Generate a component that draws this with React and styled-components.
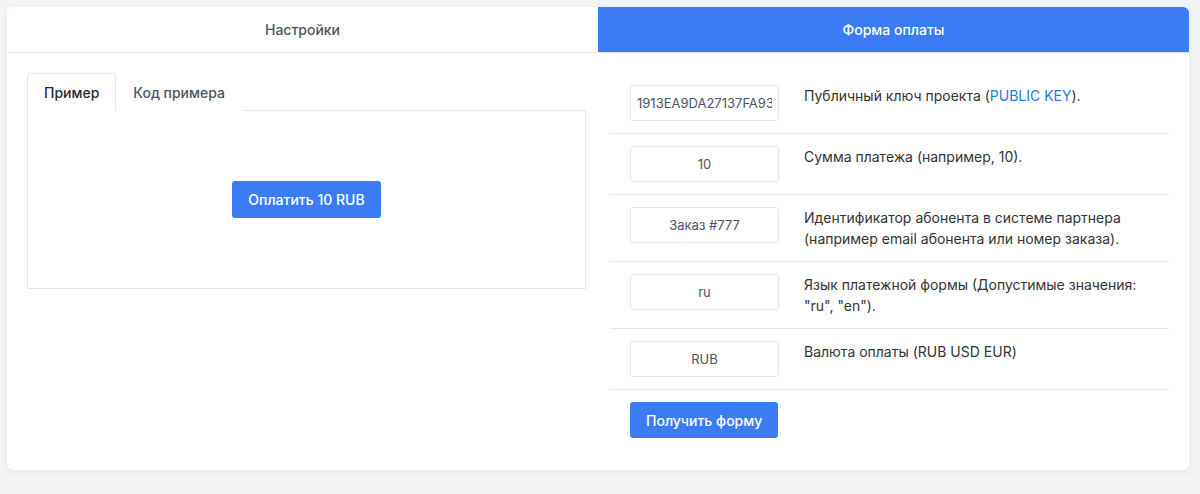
import React from "react";
import styled, { createGlobalStyle } from "styled-components";

const GlobalStyle = createGlobalStyle`
  body {
    margin: 0;
    background: #f3f4f6;
    font-family: Inter, "Noto Sans", "Liberation Sans", sans-serif;
    color: #333;
  }
`;

const Page = styled.div`
  padding: 7px 11px 24px 7px;
`;

const Card = styled.div`
  background: #fff;
  border-radius: 6px;
  box-shadow: 0 2px 8px rgba(15, 23, 42, 0.06);
  overflow: hidden;
`;

const TabBar = styled.div`
  display: grid;
  grid-template-columns: 1fr 1fr;
  border-bottom: 1px solid #e5e7eb;
`;

const MainTab = styled.div`
  height: 45px;
  display: flex;
  align-items: center;
  justify-content: center;
  font-size: 14px;
  font-weight: 500;
  color: ${(p) => (p.active ? "#fff" : "#4b5563")};
  background: ${(p) => (p.active ? "#3b7cf4" : "#fff")};
`;

const Body = styled.div`
  display: grid;
  grid-template-columns: 1fr 1fr;
  gap: 24px;
  padding: 20px 20px 32px;
`;

const LeftCol = styled.div`
  display: flex;
  flex-direction: column;
`;

const SubTabs = styled.div`
  display: flex;
  align-items: flex-end;
`;

const SubTab = styled.div`
  height: 38px;
  box-sizing: border-box;
  padding: 0 16px;
  display: flex;
  align-items: center;
  font-size: 14px;
  font-weight: 500;
  color: ${(p) => (p.active ? "#1f2937" : "#4b5563")};
  border: 1px solid ${(p) => (p.active ? "#e5e7eb" : "transparent")};
  border-bottom: none;
  border-radius: 4px 4px 0 0;
  background: #fff;
  margin-bottom: -1px;
  position: relative;
  z-index: 1;
`;

const Preview = styled.div`
  height: 179px;
  box-sizing: border-box;
  border: 1px solid #e5e7eb;
  display: flex;
  align-items: center;
  justify-content: center;
`;

const Button = styled.button`
  height: ${(p) => p.h || 36}px;
  padding: 0 16px;
  border: none;
  border-radius: 3px;
  background: #3b7cf4;
  color: #fff;
  font-family: inherit;
  font-size: 14px;
  font-weight: 500;
  cursor: pointer;
`;

const RightCol = styled.div`
  display: flex;
  flex-direction: column;
`;

const Row = styled.div`
  display: flex;
  align-items: flex-start;
  gap: 25px;
  padding: 12px 20px;
  border-bottom: 1px solid #e5e7eb;
`;

const Field = styled.input`
  width: 149px;
  height: 36px;
  box-sizing: border-box;
  flex-shrink: 0;
  border: 1px solid #e5e7eb;
  border-radius: 3px;
  padding: 0 6px;
  font-family: inherit;
  font-size: 13px;
  color: #4b5563;
  text-align: center;
  outline: none;
`;

const Label = styled.div`
  font-size: 14px;
  line-height: 21px;
  color: #333;
`;

const Link = styled.a`
  color: #1e7ae6;
  text-decoration: none;
`;

const Footer = styled.div`
  padding: 12px 20px 0;
`;

const rows = [
  { value: "1913EA9DA27137FA93C0D15E7A1B", text: "key" },
  { value: "10", text: "Сумма платежа (например, 10)." },
  {
    value: "Заказ #777",
    text: ["Идентификатор абонента в системе партнера", "(например email абонента или номер заказа)."],
  },
  {
    value: "ru",
    text: ["Язык платежной формы (Допустимые значения:", "\"ru\", \"en\")."],
  },
  { value: "RUB", text: "Валюта оплаты (RUB USD EUR)" },
];

export default function App() {
  return (
    <Page>
      <GlobalStyle />
      <Card>
        <TabBar>
          <MainTab>Настройки</MainTab>
          <MainTab active>Форма оплаты</MainTab>
        </TabBar>
        <Body>
          <LeftCol>
            <SubTabs>
              <SubTab active>Пример</SubTab>
              <SubTab>Код примера</SubTab>
            </SubTabs>
            <Preview>
              <Button h={37}>Оплатить 10 RUB</Button>
            </Preview>
          </LeftCol>
          <RightCol>
            {rows.map((r, i) => (
              <Row key={i}>
                <Field readOnly value={r.value} />
                <Label>
                  {r.text === "key" ? (
                    <>
                      Публичный ключ проекта (<Link href="#">PUBLIC KEY</Link>).
                    </>
                  ) : Array.isArray(r.text) ? (
                    r.text.map((t, j) => <div key={j}>{t}</div>)
                  ) : (
                    r.text
                  )}
                </Label>
              </Row>
            ))}
            <Footer>
              <Button>Получить форму</Button>
            </Footer>
          </RightCol>
        </Body>
      </Card>
    </Page>
  );
}
